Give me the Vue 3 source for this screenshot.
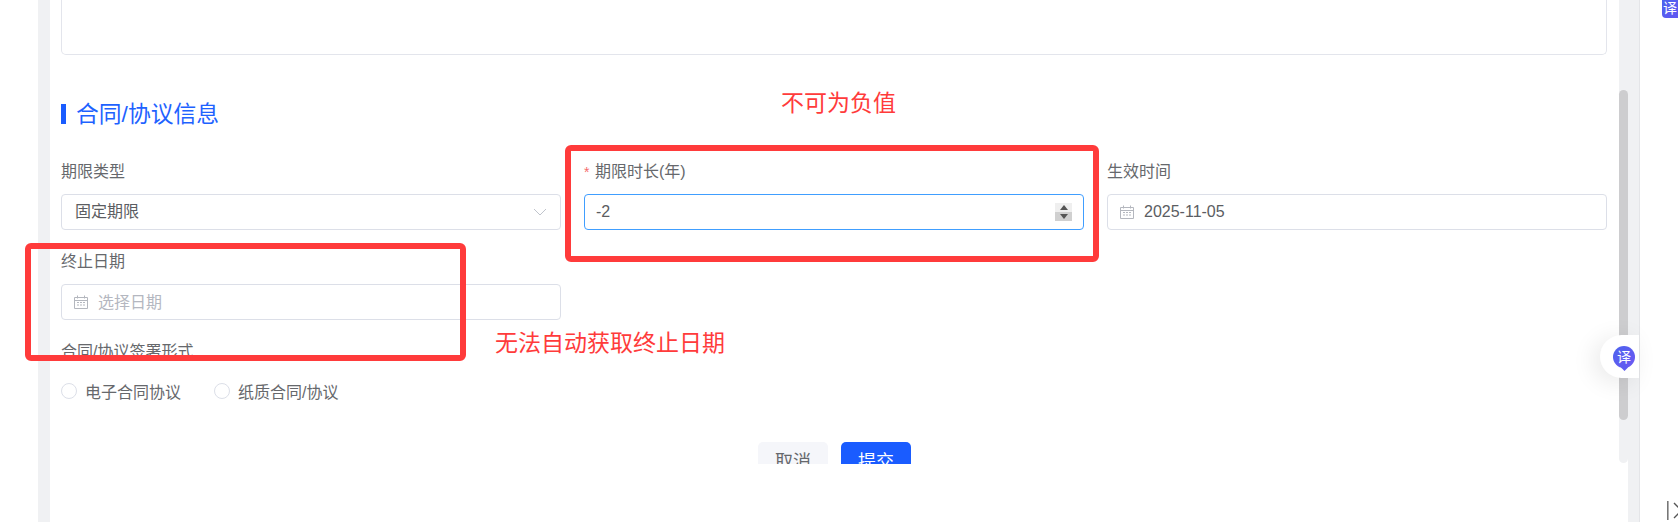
<script setup>
const radios = ['电子合同协议', '纸质合同/协议']
</script>

<template>
  <div class="page">
    <div class="gutter"></div>
    <div class="strip"></div>
    <main class="main">
      <div class="scroller">
        <div class="textarea"></div>
        <h2 class="title"><i class="title-bar"></i><span class="title-text">合同/协议信息</span></h2>
        <div class="grid">
          <div class="item">
            <div class="label">期限类型</div>
            <div class="input">
              <span class="value">固定期限</span>
              <svg class="chevron" width="14" height="8" viewBox="0 0 14 8"><path d="M1 1l6 6 6-6" fill="none" stroke="#c0c4cc" stroke-width="1"/></svg>
            </div>
          </div>
          <div class="item">
            <div class="label"><span class="star">*</span>期限时长(年)</div>
            <div class="input focused">
              <span class="value minus">-2</span>
              <div class="spinner">
                <span class="spin up"><i></i></span>
                <span class="spin down"><i></i></span>
              </div>
            </div>
          </div>
          <div class="item">
            <div class="label">生效时间</div>
            <div class="input date">
              <svg class="cal" width="14" height="14" viewBox="0 0 14 14"><path d="M.5 2.5h13v11H.5zM.5 5.5h13M3.5 .5v3M10.5 .5v3" fill="none" stroke="#b4b7be"/><path d="M3 7.5h2M6 7.5h2M9 7.5h2M3 10h2M6 10h2M9 10h2" stroke="#b4b7be"/></svg>
              <span class="value">2025-11-05</span>
            </div>
          </div>
          <div class="item">
            <div class="label">终止日期</div>
            <div class="input date">
              <svg class="cal" width="14" height="14" viewBox="0 0 14 14"><path d="M.5 2.5h13v11H.5zM.5 5.5h13M3.5 .5v3M10.5 .5v3" fill="none" stroke="#b4b7be"/><path d="M3 7.5h2M6 7.5h2M9 7.5h2M3 10h2M6 10h2M9 10h2" stroke="#b4b7be"/></svg>
              <span class="placeholder">选择日期</span>
            </div>
          </div>
        </div>
        <div class="sign">
          <div class="label">合同/协议签署形式</div>
          <div class="radios">
            <label v-for="r in radios" :key="r" class="radio"><i class="dot"></i>{{ r }}</label>
          </div>
        </div>
        <div class="actions">
          <button class="btn cancel">取消</button>
          <button class="btn submit">提交</button>
        </div>
      </div>
    </main>
    <div class="scrollbar"><div class="thumb"></div></div>
    <div class="strip right"></div>
    <div class="side"></div>

    <div class="mark mark-a"></div>
    <div class="mark mark-b"></div>
    <div class="note note-a">不可为负值</div>
    <div class="note note-b">无法自动获取终止日期</div>

    <div class="float">
      <span class="fy"><span class="fy-t">译</span><i class="fy-tail"></i></span>
    </div>
    <div class="corner"><span>译</span></div>
    <svg class="edge" width="11" height="19" viewBox="0 0 11 19"><path d="M.8 0v19" stroke="#777" stroke-width="1.6"/><path d="M7 2l5 5M7 17l5-5" stroke="#555" stroke-width="1.4" fill="none"/></svg>
  </div>
</template>

<style>
html, body { background: #fff; }
</style>

<style scoped>
.page {
  position: relative;
  display: flex;
  width: 1678px;
  height: 522px;
  overflow: hidden;
  background: #fff;
  font-family: "Liberation Sans", "Noto Sans CJK SC", sans-serif;
  font-size: 16px;
  color: #606266;
}
.gutter { width: 38px; flex: none; }
.strip { width: 12px; flex: none; background: #f0f1f3; }
.strip.right { width: 11px; }
.main { width: 1569px; flex: none; }
.scroller {
  height: 464px;
  overflow: hidden;
  padding: 0 12px 0 11px;
  box-sizing: border-box;
}
.textarea {
  height: 55px;
  box-sizing: border-box;
  border: 1px solid #e3e5ec;
  border-top: 0;
  border-radius: 0 0 5px 5px;
}
.title {
  display: flex;
  align-items: center;
  height: 30px;
  margin: 44px 0 0;
  font-size: 22.8px;
  font-weight: 400;
  color: #1e62ff;
}
.title-text { line-height: 30px; }
.title-bar {
  width: 5px;
  height: 20px;
  margin-right: 10px;
  background: #1a5cff;
}
.grid {
  display: grid;
  grid-template-columns: repeat(3, 500px);
  column-gap: 23px;
  row-gap: 20px;
  margin-top: 31px;
}
.label {
  height: 24px;
  line-height: 24px;
  color: #66686c;
  white-space: nowrap;
}
.star {
  margin-right: 4px;
  color: #f56c6c;
  font-size: 14px;
  display: inline-block;
  width: 7px;
}
.input {
  display: flex;
  align-items: center;
  height: 36px;
  margin-top: 10px;
  padding: 0 13px;
  box-sizing: border-box;
  border: 1px solid #dcdfe8;
  border-radius: 4px;
  position: relative;
}
.input.date { padding-left: 12px; }
.input.focused { border-color: #409eff; padding-left: 11px; }
.value { color: #5b5d62; line-height: 20px; }
.minus { flex: 1; }
.chevron { margin-left: auto; }
.cal { flex: none; margin-right: 10px; }
.placeholder { color: #b4b7c0; margin-bottom: 2px; }
.spinner {
  display: flex;
  flex-direction: column;
  width: 17px;
  height: 18px;
  margin-right: -2px;
}
.spin {
  flex: 1;
  display: flex;
  align-items: center;
  justify-content: center;
}
.spin i {
  width: 0;
  height: 0;
  border-left: 4px solid transparent;
  border-right: 4px solid transparent;
}
.up { background: #efefef; }
.up i { border-bottom: 5px solid #555; }
.down { background: #d0d0d0; }
.down i { border-top: 5px solid #555; }
.sign { margin-top: 20px; }
.radios {
  display: flex;
  gap: 33px;
  margin-top: 15px;
  height: 24px;
}
.radio {
  display: flex;
  align-items: center;
  color: #66686c;
  white-space: nowrap;
}
.dot {
  width: 16px;
  height: 16px;
  box-sizing: border-box;
  margin-right: 8px;
  border: 1px solid #dcdfe8;
  border-radius: 50%;
}
.actions {
  display: flex;
  justify-content: flex-start;
  gap: 13px;
  margin-top: 39px;
  padding-left: 697px;
}
.btn {
  width: 70px;
  height: 36px;
  padding: 0;
  border: 0;
  border-radius: 5px;
  font: inherit;
  font-size: 18px;
}
.cancel { background: #f5f6fa; color: #66686c; }
.submit { background: #1a5cff; color: #fff; }
.scrollbar {
  width: 9px;
  height: 463px;
  flex: none;
  background: #f0f1f3;
  border-radius: 0 0 5px 5px;
}
.thumb {
  width: 9px;
  height: 330px;
  margin-top: 90px;
  background: #cdcdcf;
  border-radius: 5px;
}
.side {
  flex: 1;
  border-left: 1px solid #e4e5e8;
}
.mark {
  position: absolute;
  box-sizing: border-box;
  border: 6px solid #ff3b3b;
  border-radius: 6px;
}
.mark-a { left: 565px; top: 145px; width: 534px; height: 117px; }
.mark-b { left: 25px; top: 243px; width: 441px; height: 118px; }
.note {
  position: absolute;
  font-size: 23px;
  line-height: 30px;
  color: #ff3b3b;
  white-space: nowrap;
}
.note-a { left: 781px; top: 88px; }
.note-b { left: 495px; top: 328px; }
.float {
  position: absolute;
  left: 1600px;
  top: 335px;
  width: 39px;
  height: 43px;
  display: flex;
  align-items: center;
  padding-left: 13px;
  box-sizing: border-box;
  background: #fff;
  border-radius: 22px 0 0 22px;
  box-shadow: -6px 4px 24px rgba(0, 0, 0, .09);
}
.fy {
  position: relative;
  display: flex;
  align-items: center;
  justify-content: center;
  width: 22px;
  height: 22px;
  border-radius: 50%;
  background: linear-gradient(135deg, #4a63ee, #6f58f2);
}
.fy-t { color: #fff; font-size: 14px; line-height: 14px; position: relative; }
.fy-tail {
  position: absolute;
  left: 9px;
  bottom: -2px;
  width: 5px;
  height: 5px;
  background: #5f5cf0;
  transform: rotate(45deg);
}
.corner {
  position: absolute;
  right: 0;
  top: 0;
  width: 16px;
  height: 18px;
  overflow: hidden;
  display: flex;
  justify-content: flex-end;
  align-items: flex-end;
  padding-bottom: 3px;
  box-sizing: border-box;
  background: linear-gradient(135deg, #4a63ee, #6257f2);
  border-radius: 0 0 0 4px;
  color: #fff;
  font-size: 14px;
  line-height: 14px;
}
.corner span { display: block; margin-right: 1px; }
.edge { position: absolute; left: 1667px; top: 501px; }
</style>
